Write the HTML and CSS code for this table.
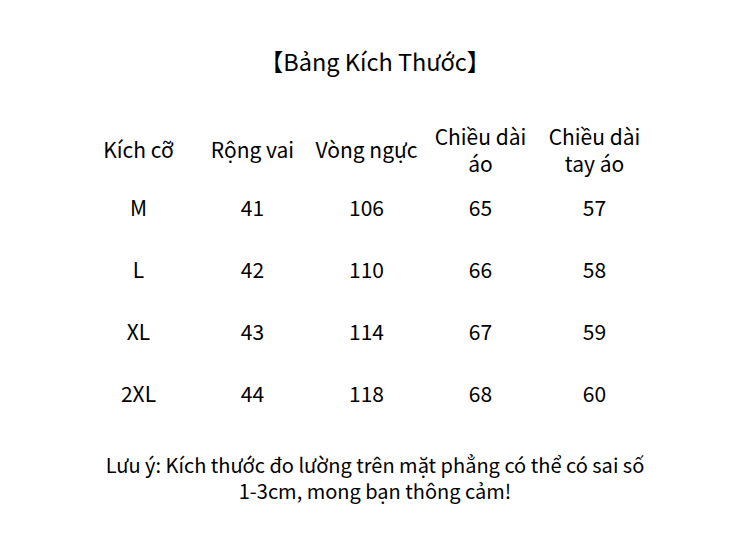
FILE: index.html
```html
<!DOCTYPE html>
<html lang="vi">
<head>
<meta charset="utf-8">
<link rel="stylesheet" href="styles.css">
</head>
<body>
<div class="page">
  <h1 class="title">【Bảng Kích Thước】</h1>
  <div class="table">
    <div class="cell head">Kích cỡ</div>
    <div class="cell head">Rộng vai</div>
    <div class="cell head">Vòng ngực</div>
    <div class="cell head">Chiều dài<br>áo</div>
    <div class="cell head">Chiều dài<br>tay áo</div>

    <div class="cell">M</div><div class="cell">41</div><div class="cell">106</div><div class="cell">65</div><div class="cell">57</div>
    <div class="cell">L</div><div class="cell">42</div><div class="cell">110</div><div class="cell">66</div><div class="cell">58</div>
    <div class="cell">XL</div><div class="cell">43</div><div class="cell">114</div><div class="cell">67</div><div class="cell">59</div>
    <div class="cell">2XL</div><div class="cell">44</div><div class="cell">118</div><div class="cell">68</div><div class="cell">60</div>
  </div>
  <div class="note">
    <div class="note-line">Lưu ý: Kích thước đo lường trên mặt phẳng có thể có sai số</div>
    <div class="note-line">1-3cm, mong bạn thông cảm!</div>
  </div>
</div>
</body>
</html>
```
FILE: styles.css
```css
html, body {
  margin: 0;
  padding: 0;
  background: #ffffff;
}
.page {
  width: 750px;
  height: 560px;
  font-family: "Noto Sans CJK SC", "Noto Sans", sans-serif;
  color: #000000;
  display: flex;
  flex-direction: column;
  align-items: center;
  padding-top: 43px;
  box-sizing: border-box;
}
.title {
  margin: 0;
  font-size: 23.5px;
  font-weight: 400;
  line-height: 37px;
}
.table {
  margin-top: 38px;
  margin-left: -17px;
  display: grid;
  grid-template-columns: repeat(5, 114px);
  grid-auto-rows: 62px;
  grid-template-rows: 58px;
}
.cell {
  font-size: 21px;
  line-height: 27px;
  display: flex;
  align-items: center;
  justify-content: center;
  text-align: center;
}
.head {
  padding-top: 5px;
}
.note {
  margin-top: 28px;
  width: 750px;
  display: flex;
  flex-direction: column;
  align-items: center;
  font-size: 20px;
  line-height: 26px;
}
.note-line {
  white-space: nowrap;
}
```
